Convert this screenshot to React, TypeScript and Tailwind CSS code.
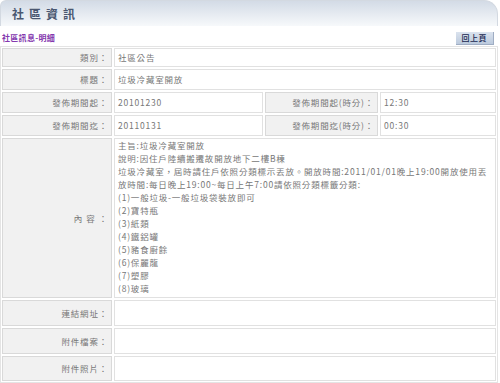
import React from "react";

const lines = [
  "主旨:垃圾冷藏室開放",
  "說明:因住戶陸續搬遷故開放地下二樓B棟",
  "垃圾冷藏室，屆時請住戶依照分類標示丟放。開放時間:2011/01/01晚上19:00開放使用丟",
  "放時間:每日晚上19:00~每日上午7:00請依照分類標籤分類:",
  "(1)一般垃圾-一般垃圾袋裝放即可",
  "(2)寶特瓶",
  "(3)紙類",
  "(4)鐵鋁罐",
  "(5)豬食廚餘",
  "(6)保麗龍",
  "(7)塑膠",
  "(8)玻璃",
];

function Label({ children, className = "" }: { children: React.ReactNode; className?: string }) {
  return (
    <div
      className={`flex items-center justify-end pr-[3px] bg-[#f1f1f1] border border-[#d9d9d9] whitespace-nowrap ${className}`}
    >
      {children}
    </div>
  );
}

function Value({ children, className = "" }: { children?: React.ReactNode; className?: string }) {
  return (
    <div className={`flex items-center pl-[3px] bg-white border border-[#e1e1e1] whitespace-nowrap ${className}`}>
      {children}
    </div>
  );
}

export default function App() {
  return (
    <div className="w-[500px] h-[383px] bg-white font-['Noto_Sans_CJK_TC','Liberation_Sans',sans-serif] overflow-hidden">
      <div className="w-[498px] h-[26px] rounded-tl-[6px] rounded-tr-[14px] border border-b-0 border-[#d3d9e1] bg-gradient-to-b from-[#d3dbe6] to-[#f7f9fb] flex items-center pl-[11px]">
        <span className="text-[12px] font-semibold tracking-[5px] text-[#4a5770] mt-[1px]">社區資訊</span>
      </div>
      <div className="h-[20px] flex items-center justify-between pt-[4px] pr-[6px]">
        <span className="pl-[2px] text-[8px] font-bold text-[#8438ae] tracking-[0.3px]">社區訊息-明細</span>
        <span className="h-[13px] px-[6px] flex items-center bg-gradient-to-b from-[#dbe3ee] to-[#bccadd] border-r border-b border-[#9fadc3] text-[8px] font-medium text-[#1a2850] tracking-[0.5px]">
          回上頁
        </span>
      </div>
      <div className="w-[498px] border border-[#e4e4e4] p-[1px] flex flex-col gap-[2px] text-[8.5px] tracking-[0.8px] text-[#777]">
        <div className="flex gap-[2px] h-[19px]">
          <Label className="w-[110px]">類別：</Label>
          <Value className="flex-1">社區公告</Value>
        </div>
        <div className="flex gap-[2px] h-[21px]">
          <Label className="w-[110px]">標題：</Label>
          <Value className="flex-1">垃圾冷藏室開放</Value>
        </div>
        <div className="flex gap-[2px] h-[21px]">
          <Label className="w-[110px]">發佈期間起：</Label>
          <Value className="w-[149px]">20101230</Value>
          <Label className="w-[113px]">發佈期間起(時分)：</Label>
          <Value className="flex-1">12:30</Value>
        </div>
        <div className="flex gap-[2px] h-[21px]">
          <Label className="w-[110px]">發佈期間迄：</Label>
          <Value className="w-[149px]">20110131</Value>
          <Label className="w-[113px]">發佈期間迄(時分)：</Label>
          <Value className="flex-1">00:30</Value>
        </div>
        <div className="flex gap-[2px] h-[160px]">
          <Label className="w-[110px]">
            <span className="tracking-[4px]">內容</span>：
          </Label>
          <div className="flex-1 bg-white border border-[#e1e1e1] pl-[3px] leading-[13px] whitespace-nowrap overflow-hidden">
            {lines.map((l, i) => (
              <div key={i}>{l}</div>
            ))}
          </div>
        </div>
        <div className="flex gap-[2px] h-[26px]">
          <Label className="w-[110px]">連結網址：</Label>
          <Value className="flex-1 bg-[#fcfcfc]" />
        </div>
        <div className="flex gap-[2px] h-[26px]">
          <Label className="w-[110px]">附件檔案：</Label>
          <Value className="flex-1 bg-[#fcfcfc]" />
        </div>
        <div className="flex gap-[2px] h-[25px]">
          <Label className="w-[110px]">附件照片：</Label>
          <Value className="flex-1 bg-[#fcfcfc]" />
        </div>
      </div>
    </div>
  );
}
